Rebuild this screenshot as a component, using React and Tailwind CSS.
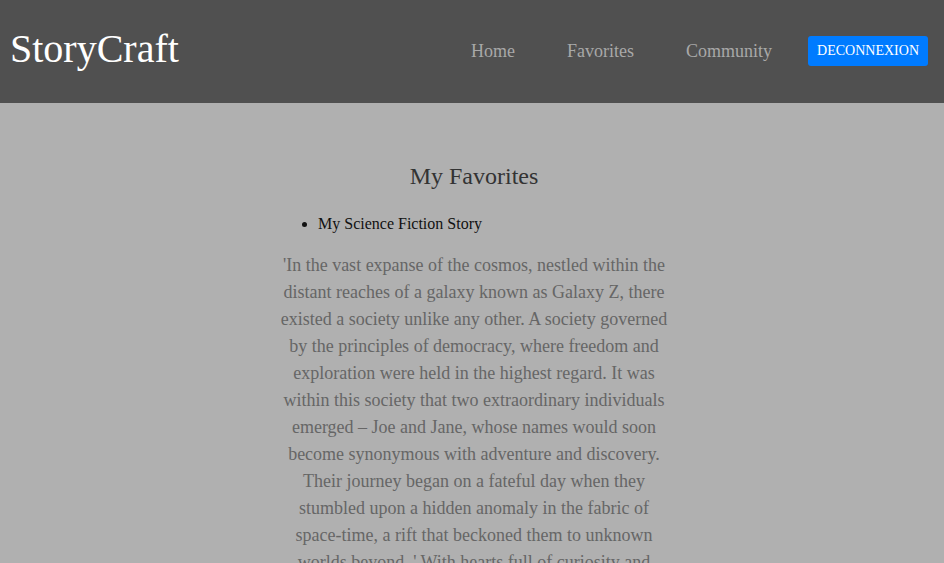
import React from "react";

const story =
  "'In the vast expanse of the cosmos, nestled within the distant reaches of a galaxy known as Galaxy Z, there existed a society unlike any other. A society governed by the principles of democracy, where freedom and exploration were held in the highest regard. It was within this society that two extraordinary individuals emerged – Joe and Jane, whose names would soon become synonymous with adventure and discovery. Their journey began on a fateful day when they stumbled upon a hidden anomaly in the fabric of space-time, a rift that beckoned them to unknown worlds beyond..' With hearts full of curiosity and determination, they set out to explore what lay on the other side.";

const NavLink = ({ children }) => (
  <a href="#" className="text-[18px] leading-[24px] text-[#a8a8a8]">
    {children}
  </a>
);

export default function App() {
  return (
    <div className="min-h-screen bg-[#b0b0b0] font-['Liberation_Serif',serif]">
      <header className="h-[103px] bg-[#505050] flex items-center justify-between pl-[10px] pr-[16px] pb-[2px]">
        <h1 className="text-[40px] leading-[48px] text-white mb-[3px]">StoryCraft</h1>
        <nav className="flex items-center">
          <div className="flex items-center gap-[52px]">
            <NavLink>Home</NavLink>
            <NavLink>Favorites</NavLink>
            <NavLink>Community</NavLink>
          </div>
          <button className="ml-[36px] h-[30px] px-[9px] rounded-[3px] bg-[#007bff] text-white text-[14px] leading-[16px]">
            DECONNEXION
          </button>
        </nav>
      </header>

      <main className="w-[396px] mx-auto pl-[4px] pt-[59px] pb-10">
        <h2 className="text-[24px] leading-[28px] text-[#333] text-center">
          My Favorites
        </h2>
        <ul className="list-disc pl-[40px] mt-[22px]">
          <li className="text-[16px] leading-[24px] text-[#111]">
            My Science Fiction Story
          </li>
        </ul>
        <p className="mt-[16px] text-[18px] leading-[27px] text-[#666] text-center">
          {story}
        </p>
      </main>
    </div>
  );
}
